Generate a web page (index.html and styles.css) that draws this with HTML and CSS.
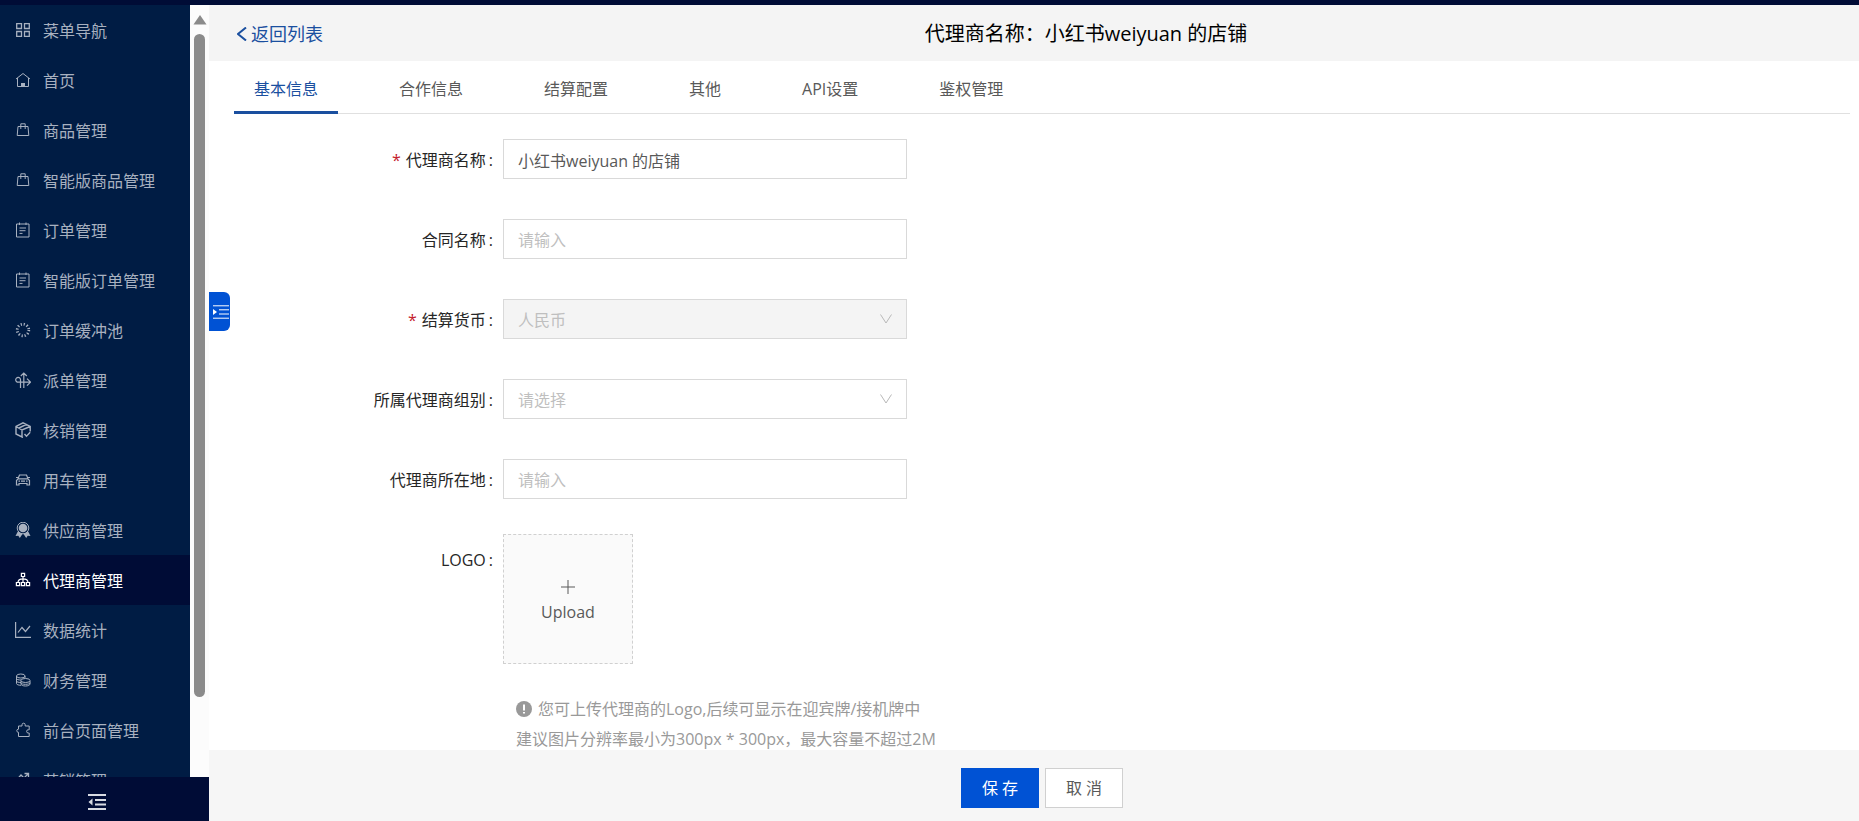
FILE: index.html
```html
<!DOCTYPE html>
<html lang="zh-CN">
<head>
  <meta charset="UTF-8" />
  <meta name="viewport" content="width=device-width, initial-scale=1.0"/>
  <title>代理商管理</title>
  <link rel="stylesheet" href="styles.css">
</head>
<body>
  <div class="topbar"></div>

  <div class="layout">
    <aside class="sidebar">
      <div class="menu-wrap">
        <nav class="menu">
          <a href="#" class="menu-item">
            <svg class="icon" viewBox="0 0 16 16"><path stroke-width="1.300" d="M1.700 1.700h4.800v4.800H1.700zM9.500 1.700h4.800v4.800H9.500zM1.700 9.500h4.800v4.800H1.700zM9.500 9.500h4.800v4.800H9.500z"/></svg>
            <span>菜单导航</span>
          </a>
          <a href="#" class="menu-item">
            <svg class="icon" viewBox="0 0 16 16"><path d="M1 7 8 1.500 15 7M2.500 6v8.500h11V6"/><path class="solid" d="M6 14.500v-3.500h4v3.500z"/></svg>
            <span>首页</span>
          </a>
          <a href="#" class="menu-item">
            <svg class="icon" viewBox="0 0 16 16"><path d="M3 4.500h10l.8 9H2.200zM5.800 7V1.800h4.400V7"/></svg>
            <span>商品管理</span>
          </a>
          <a href="#" class="menu-item">
            <svg class="icon" viewBox="0 0 16 16"><path d="M3 4.500h10l.8 9H2.200zM5.800 7V1.800h4.400V7"/></svg>
            <span>智能版商品管理</span>
          </a>
          <a href="#" class="menu-item">
            <svg class="icon" viewBox="0 0 16 16"><path d="M1.500 2h12.500v13H1.500zM4.500.5V3M11 .5V3M4.500 6h6.500M4.500 8.700h6M4.500 11.400h3"/></svg>
            <span>订单管理</span>
          </a>
          <a href="#" class="menu-item">
            <svg class="icon" viewBox="0 0 16 16"><path d="M1.500 2h12.500v13H1.500zM4.500.5V3M11 .5V3M4.500 6h6.500M4.500 8.700h6M4.500 11.400h3"/></svg>
            <span>智能版订单管理</span>
          </a>
          <a href="#" class="menu-item">
            <svg class="icon" viewBox="0 0 16 16"><circle cx="8" cy="8" r="5.800" stroke-width="2.800" stroke-dasharray="1.200 1.837"/></svg>
            <span>订单缓冲池</span>
          </a>
          <a href="#" class="menu-item">
            <svg class="icon" viewBox="0 0 16 16"><path stroke-width="1.200" d="M8.800 16V1M5.800 4l3-3 3 3M5.500 16V8A2.400 2.400 0 1 0 3.200 10.200h12M12 6.700l3.500 3.500-3.500 3.500"/></svg>
            <span>派单管理</span>
          </a>
          <a href="#" class="menu-item">
            <svg class="icon" viewBox="0 0 16 16"><path stroke-width="1.400" d="M8 15.500 1 12V4.500L8 .8l7.200 3.700v5M1 4.500 7 8l8.200-3.500M7 8v7M4 6l7.500-3.700M9.500 12l2 2.300 3.700-4"/></svg>
            <span>核销管理</span>
          </a>
          <a href="#" class="menu-item">
            <svg class="icon" viewBox="0 0 16 16"><path stroke-width="1.200" d="M3 6.800 4.500 3h7L13 6.800M1 5.500h2M13 5.500h2M1.500 13V8.500L3 6.800h10l1.500 1.700V13h-2.500v-1.500H4V13zM3.500 9.200h1.500M11 9.200h1.500M6 9.200h4"/></svg>
            <span>用车管理</span>
          </a>
          <a href="#" class="menu-item">
            <svg class="icon" viewBox="0 0 16 16"><circle cx="8" cy="6" r="5.800"/><circle cx="8" cy="6" r="4.300" class="solid"/><path class="solid" d="M2.800 9.500.5 14l2.800-.2L4.800 16l2.700-4zM13.200 9.500l2.300 4.500-2.800-.2-1.500 2.200-2.700-4z"/></svg>
            <span>供应商管理</span>
          </a>
          <a href="#" class="menu-item active">
            <svg class="icon" viewBox="0 0 16 16"><path stroke-width="1.200" d="M6.400 1.300h3.200v3.200H6.400zM1.400 10.500h3.200v3.200H1.400zM6.400 10.500h3.200v3.200H6.400zM11.400 10.500h3.200v3.200h-3.200zM8 4.500v6M3 10.500C3 8 5 6.800 8 6.800s5 1.200 5 3.700"/></svg>
            <span>代理商管理</span>
          </a>
          <a href="#" class="menu-item">
            <svg class="icon" viewBox="0 0 16 16"><path stroke-width="1.200" d="M.6 0v15.400H16M3 10.500l4-5 3.500 4L15 4"/></svg>
            <span>数据统计</span>
          </a>
          <a href="#" class="menu-item">
            <svg class="icon" viewBox="0 0 16 16"><path d="M1.500 4v7.500c0 1 2 1.800 4.500 1.800M10 6V4M1.500 6.500c0 1 2 1.500 4.500 1.500M1.500 9c0 1 2 1.500 4.500 1.500M6 9v3c0 1.200 2 2 4.500 2s4.500-.8 4.500-2V9"/><ellipse cx="5.800" cy="4" rx="4.300" ry="2"/><ellipse cx="10.500" cy="8.500" rx="4.500" ry="2"/><path d="M6 10.800c0 1 2 1.500 4.500 1.500s4.500-.5 4.500-1.500"/></svg>
            <span>财务管理</span>
          </a>
          <a href="#" class="menu-item">
            <svg class="icon" viewBox="0 0 16 16"><path d="M3.500 4h3.500V2.800a1.600 1.600 0 0 1 3.200 0V4h4v3.800h-1a1.200 1.200 0 0 0 0 3.200h1v3.500H3.500v-4.200H3A1.600 1.600 0 0 1 3 7.200h.5z"/></svg>
            <span>前台页面管理</span>
          </a>
          <a href="#" class="menu-item">
            <svg class="icon" viewBox="0 0 16 16"><path stroke-width="1.300" d="M1.500 8 6 3l3 3 4.500-4.500M9.500 1.500h4v4M2 14.500h12"/></svg>
            <span>营销管理</span>
          </a>
        </nav>
        <div class="scrollbar">
          <svg class="scroll-up" viewBox="0 0 14 10"><path d="M7 0 13.500 9.500H.5z"/></svg>
          <div class="scroll-thumb"></div>
        </div>
      </div>
      <button type="button" class="sidebar-fold" aria-label="收起菜单">
        <svg viewBox="0 0 18 16"><path d="M0 1h18M7 6h11M7 10.500h11M0 15h18"/><path class="solid" d="M4.500 4.500v7L.5 8z"/></svg>
      </button>
    </aside>

    <main class="main">
      <button type="button" class="unfold" aria-label="展开菜单">
        <svg viewBox="0 0 16 14"><path d="M0 .8h16M6 4.800h10M6 9h10M0 13.200h16"/><path class="solid" d="M0 4v6l4-3z"/></svg>
      </button>

      <header class="page-header">
        <a href="#" class="back">
          <svg viewBox="0 0 10 14"><path d="M9 .5 1 7l8 6.500"/></svg>返回列表
        </a>
        <h1>代理商名称：小红书weiyuan 的店铺</h1>
      </header>

      <div class="content">
        <div class="tabs" role="tablist">
          <button type="button" role="tab" class="tab active">基本信息</button>
          <button type="button" role="tab" class="tab">合作信息</button>
          <button type="button" role="tab" class="tab">结算配置</button>
          <button type="button" role="tab" class="tab">其他</button>
          <button type="button" role="tab" class="tab">API设置</button>
          <button type="button" role="tab" class="tab">鉴权管理</button>
        </div>

        <form class="form" id="agentForm">
          <div class="row">
            <label for="agentName"><span class="star">*</span>代理商名称<span class="colon">:</span></label>
            <input type="text" id="agentName" value="小红书weiyuan 的店铺" />
          </div>
          <div class="row">
            <label for="contractName">合同名称<span class="colon">:</span></label>
            <input type="text" id="contractName" placeholder="请输入" />
          </div>
          <div class="row">
            <label for="currency"><span class="star">*</span>结算货币<span class="colon">:</span></label>
            <div class="select">
              <select id="currency" disabled>
                <option>人民币</option>
              </select>
              <svg viewBox="0 0 12 10"><path d="M.5.500 6 9 11.500.500"/></svg>
            </div>
          </div>
          <div class="row">
            <label for="agentGroup">所属代理商组别<span class="colon">:</span></label>
            <div class="select">
              <select id="agentGroup">
                <option value="">请选择</option>
              </select>
              <svg viewBox="0 0 12 10"><path d="M.5.500 6 9 11.500.500"/></svg>
            </div>
          </div>
          <div class="row">
            <label for="location">代理商所在地<span class="colon">:</span></label>
            <input type="text" id="location" placeholder="请输入" />
          </div>
          <div class="row row-logo">
            <label for="logoUpload">LOGO<span class="colon">:</span></label>
            <div class="logo-field">
              <button type="button" class="upload" id="logoUpload">
                <svg viewBox="0 0 14 14"><path d="M7 0v14M0 7h14"/></svg>
                <span>Upload</span>
              </button>
              <div class="tips">
                <p>
                  <svg viewBox="0 0 16 16"><circle cx="8" cy="8" r="8"/><path d="M8 3.500v6M8 11v1.600"/></svg>
                  <span>您可上传代理商的Logo,后续可显示在迎宾牌/接机牌中</span>
                </p>
                <p>建议图片分辨率最小为300px * 300px，最大容量不超过2M</p>
              </div>
            </div>
          </div>
        </form>
      </div>

      <footer class="actions">
        <button type="submit" form="agentForm" class="btn primary">保 存</button>
        <button type="button" class="btn">取 消</button>
      </footer>
    </main>
  </div>
</body>
</html>
```
FILE: styles.css
```css
* {
  box-sizing: border-box;
}

body {
  display: flex;
  flex-direction: column;
  height: 100vh;
  margin: 0;
  overflow: hidden;
  font-family: "Open Sans", "Noto Sans CJK SC", sans-serif;
  font-size: 16px;
  line-height: 24px;
  color: #595959;
  background-color: #fff;
}

a {
  text-decoration: none;
}

button, input, select {
  font: inherit;
  color: inherit;
}

button {
  border: none;
  cursor: pointer;
}

svg {
  display: block;
  flex: none;
  fill: none;
  stroke: currentColor;
}

.topbar {
  flex: none;
  height: 5px;
  background-color: #000c36;
}

.layout {
  display: flex;
  flex: 1;
  min-height: 0;
}

/* sidebar */

.sidebar {
  display: flex;
  flex-direction: column;
  flex: none;
  width: 209px;
}

.menu-wrap {
  display: flex;
  flex: 1;
  min-height: 0;
}

.menu {
  flex: 1;
  overflow: hidden;
  background-color: #001c44;
}

.menu-item {
  display: flex;
  align-items: center;
  gap: 12px;
  height: 50px;
  padding: 1px 0 0 15px;
  color: #a8b1c0;
}

.menu-item.active {
  color: #fff;
  background-color: #000c36;
}

.icon {
  width: 16px;
  height: 16px;
  margin-bottom: 2px;
}

.scrollbar {
  display: flex;
  flex-direction: column;
  align-items: center;
  width: 19px;
  padding-top: 10px;
  background-color: #fcfcfc;
}

.scroll-up {
  width: 14px;
  height: 10px;
  fill: #8b8b8b;
  stroke: none;
}

.scroll-thumb {
  width: 11px;
  height: 87%;
  margin-top: 9px;
  border-radius: 6px;
  background-color: #8b8b8b;
}

.sidebar-fold {
  display: flex;
  align-items: center;
  flex: none;
  height: 44px;
  padding: 6px 0 0 88px;
  color: #d8dbe3;
  background-color: #000c36;
}

.sidebar-fold svg {
  width: 18px;
  height: 16px;
  stroke-width: 2;
}

.solid {
  fill: currentColor;
  stroke: none;
}

/* main */

.main {
  position: relative;
  display: flex;
  flex-direction: column;
  flex: 1;
  min-width: 0;
}

.unfold {
  position: absolute;
  top: 287px;
  left: 0;
  width: 21px;
  height: 39px;
  padding: 0 0 0 4px;
  border-radius: 0 6px 6px 0;
  color: #fff;
  background-color: #0052d4;
}

.unfold svg {
  width: 16px;
  height: 14px;
}

.page-header {
  display: flex;
  align-items: center;
  flex: none;
  height: 56px;
  padding: 2px 10px 0 28px;
  background-color: #f4f4f4;
}

.back {
  display: flex;
  align-items: center;
  gap: 4px;
  font-size: 18px;
  color: #1a4f9f;
}

.back svg {
  width: 10px;
  height: 14px;
  stroke-width: 2;
}

.page-header h1 {
  flex: 1;
  margin: 0;
  font-size: 20px;
  font-weight: normal;
  text-align: center;
  color: #000;
}

.content {
  flex: 1;
  min-height: 0;
  padding: 0 9px 0 25px;
  overflow: hidden;
}

.tabs {
  display: flex;
  gap: 41px;
  height: 53px;
  border-bottom: 1px solid #e0e0e0;
}

.tab {
  height: 53px;
  padding: 6px 20px 0;
  border-bottom: 3px solid transparent;
  background-color: transparent;
}

.tab.active {
  border-bottom-color: #1a4f9f;
  color: #1a4f9f;
}

/* form */

.form {
  display: flex;
  flex-direction: column;
  gap: 40px;
  padding-top: 25px;
}

.row {
  display: grid;
  grid-template-columns: 269px 404px;
}

.row label {
  height: 40px;
  padding-right: 10px;
  line-height: 42px;
  text-align: right;
  color: #262626;
}

.star {
  margin-right: 5px;
  color: #c4202b;
}

.colon {
  margin-left: 3px;
}

.row input, .row select {
  width: 100%;
  height: 40px;
  padding: 1px 14px 0;
  border: 1px solid #d9d9d9;
  border-radius: 0;
  outline: none;
  background-color: #fff;
}

.row input::placeholder {
  color: #bfbfbf;
}

.select {
  position: relative;
}

.row select {
  appearance: none;
  color: #bfbfbf;
}

.row select:disabled {
  opacity: 1;
  background-color: #f4f4f4;
}

.select svg {
  position: absolute;
  top: 15px;
  right: 15px;
  width: 12px;
  height: 10px;
  color: #b8b8b8;
  pointer-events: none;
}

.row-logo {
  margin-top: -5px;
}

.row-logo label {
  padding-top: 5px;
}

.upload {
  display: flex;
  flex-direction: column;
  align-items: center;
  justify-content: center;
  gap: 6px;
  width: 130px;
  height: 130px;
  padding-top: 6px;
  border: 1px dashed #d0d0d0;
  background-color: #fafafa;
}

.upload svg {
  width: 14px;
  height: 14px;
}

.tips {
  padding: 30px 0 0 13px;
  white-space: nowrap;
  color: #999;
}

.tips p {
  display: flex;
  align-items: center;
  gap: 6px;
  margin: 0;
  line-height: 30px;
}

.tips svg {
  width: 16px;
  height: 16px;
  fill: #999;
  stroke: none;
}

.tips svg path {
  stroke: #fff;
  stroke-width: 2;
}

.actions {
  display: flex;
  align-items: center;
  justify-content: center;
  gap: 6px;
  flex: none;
  height: 71px;
  padding: 4px 0 0 16px;
  background-color: #f6f6f6;
}

.btn {
  width: 78px;
  height: 40px;
  padding: 0;
  border: 1px solid #d0d0d0;
  background-color: #fff;
}

.btn.primary {
  border-color: #0052d4;
  color: #fff;
  background-color: #0052d4;
}
```
